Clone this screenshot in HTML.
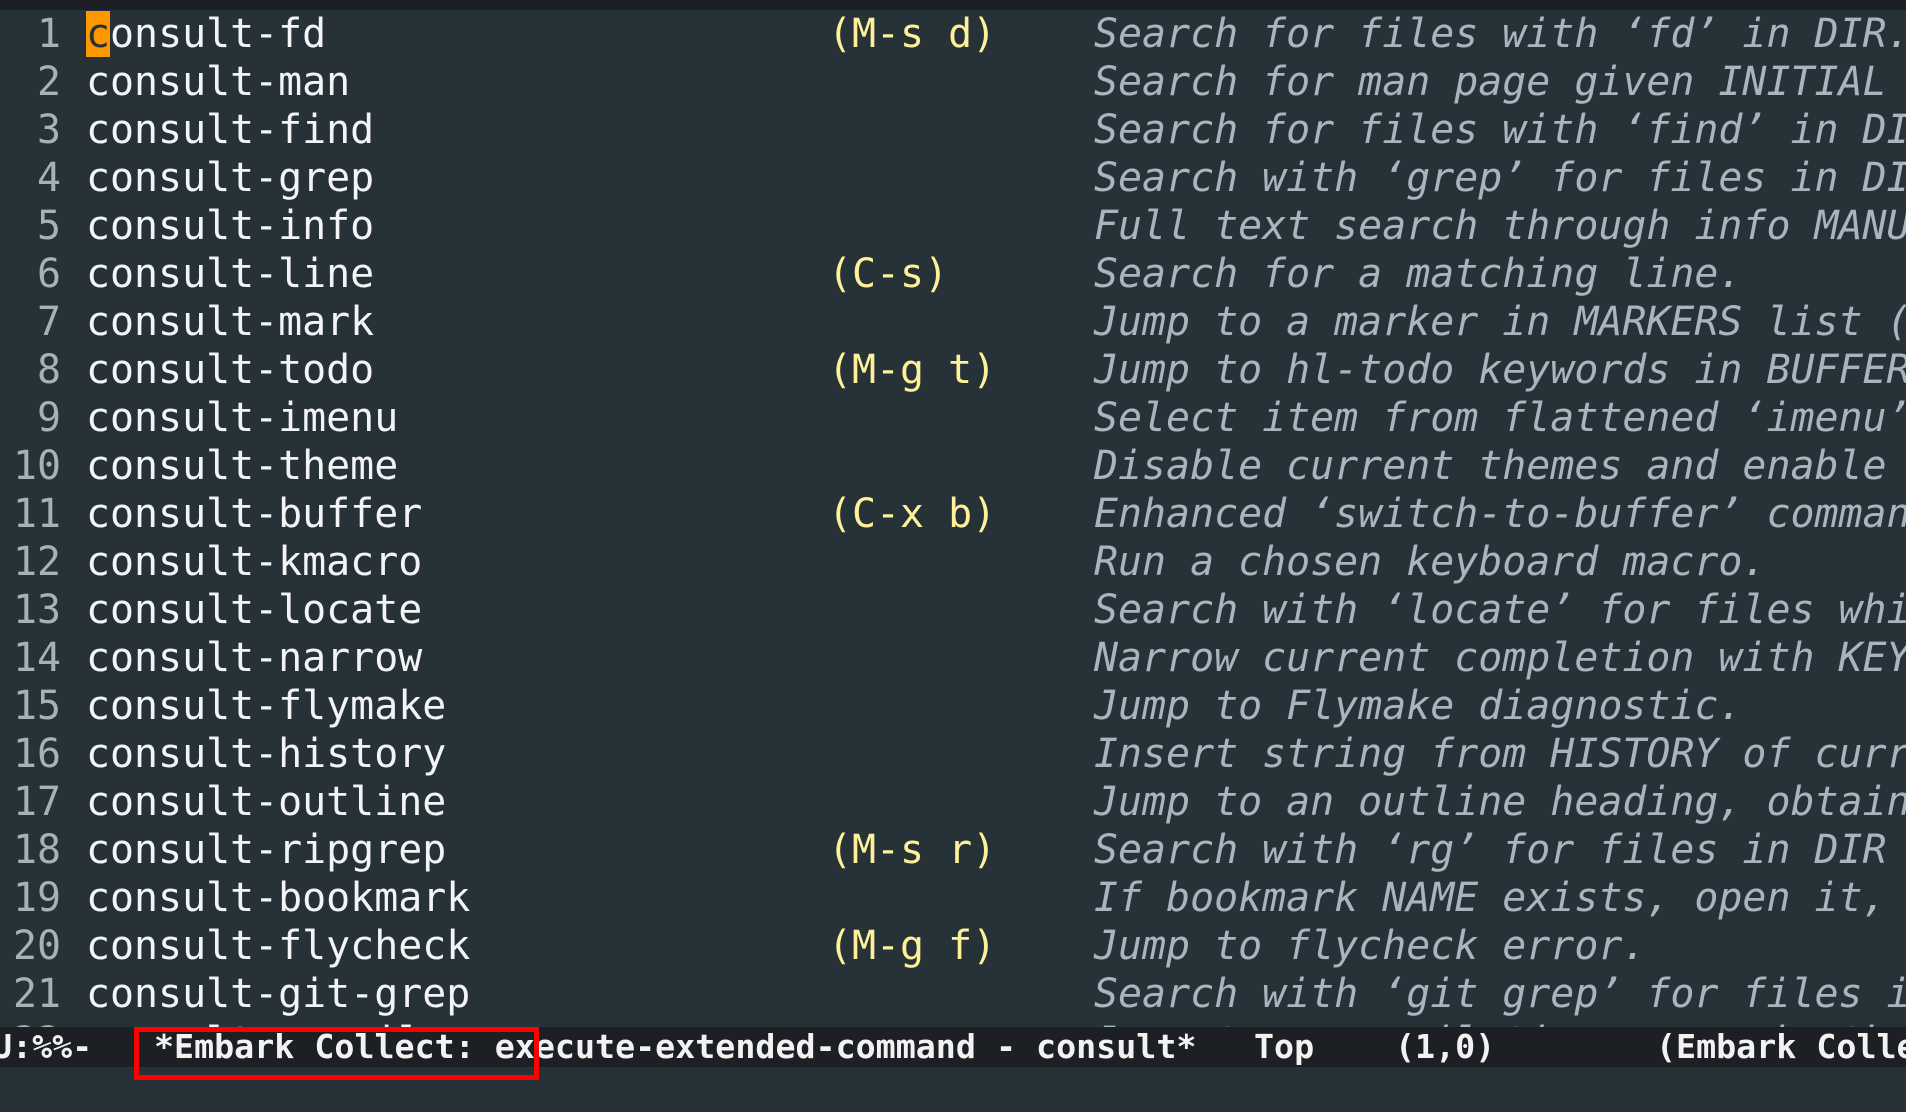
<!DOCTYPE html>
<html><head><meta charset="utf-8"><style>
html,body{margin:0;padding:0;}
body{width:1906px;height:1112px;background:#263238;overflow:hidden;position:relative;font-family:"DejaVu Sans Mono","Liberation Mono",monospace;}
.top{position:absolute;left:0;top:0;width:1906px;height:10px;background:#1c1f24;}
.row{position:absolute;left:0;height:48px;width:1906px;white-space:pre;font-size:39.9px;line-height:48px;}
.n{position:absolute;right:1845px;color:#a7b1b7;}
.c{position:absolute;left:86px;color:#f2f4f5;}
.k{position:absolute;left:828px;color:#fff09a;}
.d{position:absolute;left:1094px;color:#a7b6be;font-style:italic;}
.cur{background:#ff9800;color:#263238;}
.ml{position:absolute;left:0;top:1027px;width:1906px;height:40px;background:#1c1f24;color:#f2f2f2;font-weight:bold;font-size:33.3px;line-height:40px;white-space:pre;}
.ml span{position:absolute;}
.box{position:absolute;left:134px;top:1027px;width:395px;height:43px;border:5px solid #ff0000;}
</style></head><body>
<div class="top"></div>
<div class="row" style="top:10px"><span class="n">1</span><span class="c"><span class="cur">c</span>onsult-fd</span><span class="k">(M-s d)</span><span class="d">Search for files with ‘fd’ in DIR.</span></div>
<div class="row" style="top:58px"><span class="n">2</span><span class="c">consult-man</span><span class="d">Search for man page given INITIAL</span></div>
<div class="row" style="top:106px"><span class="n">3</span><span class="c">consult-find</span><span class="d">Search for files with ‘find’ in DI</span></div>
<div class="row" style="top:154px"><span class="n">4</span><span class="c">consult-grep</span><span class="d">Search with ‘grep’ for files in DI</span></div>
<div class="row" style="top:202px"><span class="n">5</span><span class="c">consult-info</span><span class="d">Full text search through info MANU</span></div>
<div class="row" style="top:250px"><span class="n">6</span><span class="c">consult-line</span><span class="k">(C-s)</span><span class="d">Search for a matching line.</span></div>
<div class="row" style="top:298px"><span class="n">7</span><span class="c">consult-mark</span><span class="d">Jump to a marker in MARKERS list (</span></div>
<div class="row" style="top:346px"><span class="n">8</span><span class="c">consult-todo</span><span class="k">(M-g t)</span><span class="d">Jump to hl-todo keywords in BUFFER</span></div>
<div class="row" style="top:394px"><span class="n">9</span><span class="c">consult-imenu</span><span class="d">Select item from flattened ‘imenu’</span></div>
<div class="row" style="top:442px"><span class="n">10</span><span class="c">consult-theme</span><span class="d">Disable current themes and enable </span></div>
<div class="row" style="top:490px"><span class="n">11</span><span class="c">consult-buffer</span><span class="k">(C-x b)</span><span class="d">Enhanced ‘switch-to-buffer’ comman</span></div>
<div class="row" style="top:538px"><span class="n">12</span><span class="c">consult-kmacro</span><span class="d">Run a chosen keyboard macro.</span></div>
<div class="row" style="top:586px"><span class="n">13</span><span class="c">consult-locate</span><span class="d">Search with ‘locate’ for files whi</span></div>
<div class="row" style="top:634px"><span class="n">14</span><span class="c">consult-narrow</span><span class="d">Narrow current completion with KEY</span></div>
<div class="row" style="top:682px"><span class="n">15</span><span class="c">consult-flymake</span><span class="d">Jump to Flymake diagnostic.</span></div>
<div class="row" style="top:730px"><span class="n">16</span><span class="c">consult-history</span><span class="d">Insert string from HISTORY of curr</span></div>
<div class="row" style="top:778px"><span class="n">17</span><span class="c">consult-outline</span><span class="d">Jump to an outline heading, obtain</span></div>
<div class="row" style="top:826px"><span class="n">18</span><span class="c">consult-ripgrep</span><span class="k">(M-s r)</span><span class="d">Search with ‘rg’ for files in DIR </span></div>
<div class="row" style="top:874px"><span class="n">19</span><span class="c">consult-bookmark</span><span class="d">If bookmark NAME exists, open it, </span></div>
<div class="row" style="top:922px"><span class="n">20</span><span class="c">consult-flycheck</span><span class="k">(M-g f)</span><span class="d">Jump to flycheck error.</span></div>
<div class="row" style="top:970px"><span class="n">21</span><span class="c">consult-git-grep</span><span class="d">Search with ‘git grep’ for files i</span></div>
<div class="row" style="top:1018px"><span class="n">22</span><span class="c">consult-compile-error</span><span class="d">Jump to a compilation error in the</span></div>
<div class="ml"><span style="left:-8px">U:%%-</span><span style="left:154px">*Embark Collect: execute-extended-command - consult*</span><span style="left:1254px">Top</span><span style="left:1395px">(1,0)</span><span style="left:1656px">(Embark Collect)</span></div>
<div class="box"></div>
</body></html>
